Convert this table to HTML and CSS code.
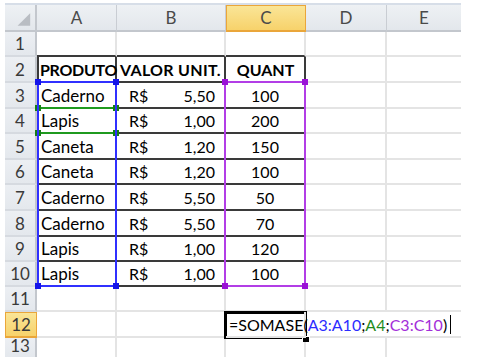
FILE: index.html
```html
<!DOCTYPE html>
<html>
<head>
<meta charset="utf-8">
<link rel="stylesheet" href="styles.css">
</head>
<body>
<div class="wrap">
<div class="sheet">
  <div class="cell corner"><svg class="tri" width="31" height="26" viewBox="0 0 31 26"><polygon points="13,22 26,22 26,9" fill="#b9bdc3"/></svg></div>
  <div class="cell ch">A</div>
  <div class="cell ch">B</div>
  <div class="cell ch sel">C</div>
  <div class="cell ch">D</div>
  <div class="cell ch last">E</div>

  <div class="cell rh">1</div>
  <div class="cell tt"></div>
  <div class="cell tt"></div>
  <div class="cell tt"></div>
  <div class="cell"></div>
  <div class="cell last"></div>

  <div class="cell rh">2</div>
  <div class="cell t tl hd hp">PRODUTO</div>
  <div class="cell t hd hb">VALOR UNIT.</div>
  <div class="cell t hd cen">QUANT</div>
  <div class="cell"></div>
  <div class="cell last"></div>

  <div class="cell rh">3</div>
  <div class="cell t tl txt">Caderno</div>
  <div class="cell t acc"><span>R$</span><span>5,50</span></div>
  <div class="cell t cen">100</div>
  <div class="cell"></div>
  <div class="cell last"></div>

  <div class="cell rh">4</div>
  <div class="cell t tl txt">Lapis</div>
  <div class="cell t acc"><span>R$</span><span>1,00</span></div>
  <div class="cell t cen">200</div>
  <div class="cell"></div>
  <div class="cell last"></div>

  <div class="cell rh">5</div>
  <div class="cell t tl txt">Caneta</div>
  <div class="cell t acc"><span>R$</span><span>1,20</span></div>
  <div class="cell t cen">150</div>
  <div class="cell"></div>
  <div class="cell last"></div>

  <div class="cell rh">6</div>
  <div class="cell t tl txt">Caneta</div>
  <div class="cell t acc"><span>R$</span><span>1,20</span></div>
  <div class="cell t cen">100</div>
  <div class="cell"></div>
  <div class="cell last"></div>

  <div class="cell rh">7</div>
  <div class="cell t tl txt">Caderno</div>
  <div class="cell t acc"><span>R$</span><span>5,50</span></div>
  <div class="cell t cen">50</div>
  <div class="cell"></div>
  <div class="cell last"></div>

  <div class="cell rh">8</div>
  <div class="cell t tl txt">Caderno</div>
  <div class="cell t acc"><span>R$</span><span>5,50</span></div>
  <div class="cell t cen">70</div>
  <div class="cell"></div>
  <div class="cell last"></div>

  <div class="cell rh">9</div>
  <div class="cell t tl txt">Lapis</div>
  <div class="cell t acc"><span>R$</span><span>1,00</span></div>
  <div class="cell t cen">120</div>
  <div class="cell"></div>
  <div class="cell last"></div>

  <div class="cell rh">10</div>
  <div class="cell t tl txt">Lapis</div>
  <div class="cell t acc"><span>R$</span><span>1,00</span></div>
  <div class="cell t cen">100</div>
  <div class="cell"></div>
  <div class="cell last"></div>

  <div class="cell rh">11</div>
  <div class="cell"></div>
  <div class="cell"></div>
  <div class="cell"></div>
  <div class="cell"></div>
  <div class="cell last"></div>

  <div class="cell rh sel">12</div>
  <div class="cell"></div>
  <div class="cell"></div>
  <div class="cell formula">=SOMASE(<span class="rb">A3:A10</span>;<span class="rg">A4</span>;<span class="rp">C3:C10</span>)<span class="caret"></span></div>
  <div class="cell nob"></div>
  <div class="cell last"></div>

  <div class="cell rh bottom">13</div>
  <div class="cell bottom"></div>
  <div class="cell bottom"></div>
  <div class="cell bottom"></div>
  <div class="cell bottom"></div>
  <div class="cell last bottom"></div>
</div>
<div class="overlay">
  <div class="range green"><i class="h tl2"></i><i class="h tr"></i><i class="h bl"></i><i class="h br"></i></div>
  <div class="range blue"><i class="h tl2"></i><i class="h tr"></i><i class="h bl"></i><i class="h br"></i></div>
  <div class="range purple"><i class="h tl2"></i><i class="h tr"></i><i class="h bl"></i><i class="h br"></i></div>
  <div class="active"><i class="fill"></i></div>
</div>
</div>
</body>
</html>
```

FILE: styles.css
```css
html, body {
  margin: 0;
  background: #ffffff;
}

body {
  padding: 3px 0 0 5px;
  font-family: Lato, "Liberation Sans", sans-serif;
}

.wrap {
  position: relative;
  width: 456px;
  height: 354px;
  overflow: hidden;
}

.sheet, .overlay {
  display: grid;
  grid-template-columns: 32px 80px 109px 80px 81px 74px;
  grid-template-rows: 27px 25px 26px 26px 25px 26px 25px 26px 26px 25px 25px 25px 26px 19px;
  width: 456px;
  border-top: 2px solid #d7dee8;
}

.overlay {
  position: absolute;
  left: 0;
  top: 0;
  border-top-color: transparent;
  pointer-events: none;
}

.cell {
  box-sizing: border-box;
  display: flex;
  align-items: flex-end;
  padding: 0 2px 1px 2px;
  border-right: 2px solid #e4e4e4;
  border-bottom: 2px solid #e4e4e4;
  font-size: 16px;
  line-height: 20px;
  color: #000;
  white-space: nowrap;
  min-width: 0;
}

.cell.last { border-right: none; }
.cell.nob { border-right: none; }
.cell.bottom { border-bottom: none; }

.corner {
  padding: 0;
  background: linear-gradient(#eef1f4, #e3e7ec);
  border-right: 2px solid #c3c7cd;
  border-bottom: 2px solid #c3c7cd;
}

.tri {
  display: block;
}

.ch {
  justify-content: center;
  padding-bottom: 2px;
  background: linear-gradient(#eef1f4, #e3e7ec);
  border-right: 1px solid #c9cdd3;
  border-bottom: 2px solid #c3c7cd;
  color: #4a4a4a;
  font-size: 17px;
}

.rh {
  justify-content: center;
  background: linear-gradient(#eceff3, #e4e8ed);
  border-right: 2px solid #c3c7cd;
  border-bottom: 2px solid #d6dae0;
  color: #3a3a3a;
  font-size: 17px;
}

.ch.sel, .rh.sel {
  background: linear-gradient(#fae597, #f7d26b);
  border: 1px solid #eaa63a;
  border-bottom-width: 2px;
}

.ch.last { border-right: none; }

.t {
  border-right: 2px solid #3a3a3a;
  border-bottom: 2px solid #3a3a3a;
}

.tl {
  border-left: 2px solid #3a3a3a;
}

.tt {
  border-bottom: 2px solid #3a3a3a;
}

.hd {
  font-weight: 700;
  padding-left: 1px;
  padding-right: 0;
}

.hp { letter-spacing: -0.3px; }

.hb { padding-left: 3px; letter-spacing: 0.3px; }

.txt {
  padding-left: 2px;
  font-size: 17px;
}

.cen { justify-content: center; }

.acc {
  justify-content: space-between;
  padding-left: 12px;
  padding-right: 9px;
}

.formula {
  overflow: visible;
  padding-left: 3px;
  position: relative;
  z-index: 2;
}

.rb { color: #2d2dff; }
.rg { color: #1e8c1e; }
.rp { color: #a32fd9; }

.caret {
  display: block;
  flex: 0 0 1px;
  width: 1px;
  height: 19px;
  background: #000;
  margin-left: 3px;
  margin-bottom: 1px;
}

.range {
  position: relative;
  box-sizing: border-box;
  border: 2px solid;
}

.range.blue {
  grid-column: 2;
  grid-row: 4 / 12;
  margin-top: -2px;
  border-color: #3030ff;
}

.range.green {
  grid-column: 2;
  grid-row: 5 / 6;
  margin-top: -2px;
  border-color: #1f9a1f;
}

.range.purple {
  grid-column: 4;
  grid-row: 4 / 12;
  margin: -2px 0 0 -2px;
  border-color: #b23ee6;
}

.h {
  position: absolute;
  width: 6px;
  height: 6px;
}

.blue .h { background: #1414e8; }
.green .h { background: #148014; }
.purple .h { background: #9a12d6; }

.tl2 { left: -4px; top: -4px; }
.tr { right: -4px; top: -4px; }
.bl { left: -4px; bottom: -4px; }
.br { right: -4px; bottom: -4px; }

.active {
  position: relative;
  grid-column: 4;
  grid-row: 13;
  margin: -1px -1px -1px -2px;
  border: 3px solid #000;
  box-sizing: border-box;
}

.fill {
  position: absolute;
  right: -6px;
  bottom: -6px;
  width: 6px;
  height: 5px;
  background: #000;
  border: 1px solid #fff;
  border-bottom: none;
}
```
